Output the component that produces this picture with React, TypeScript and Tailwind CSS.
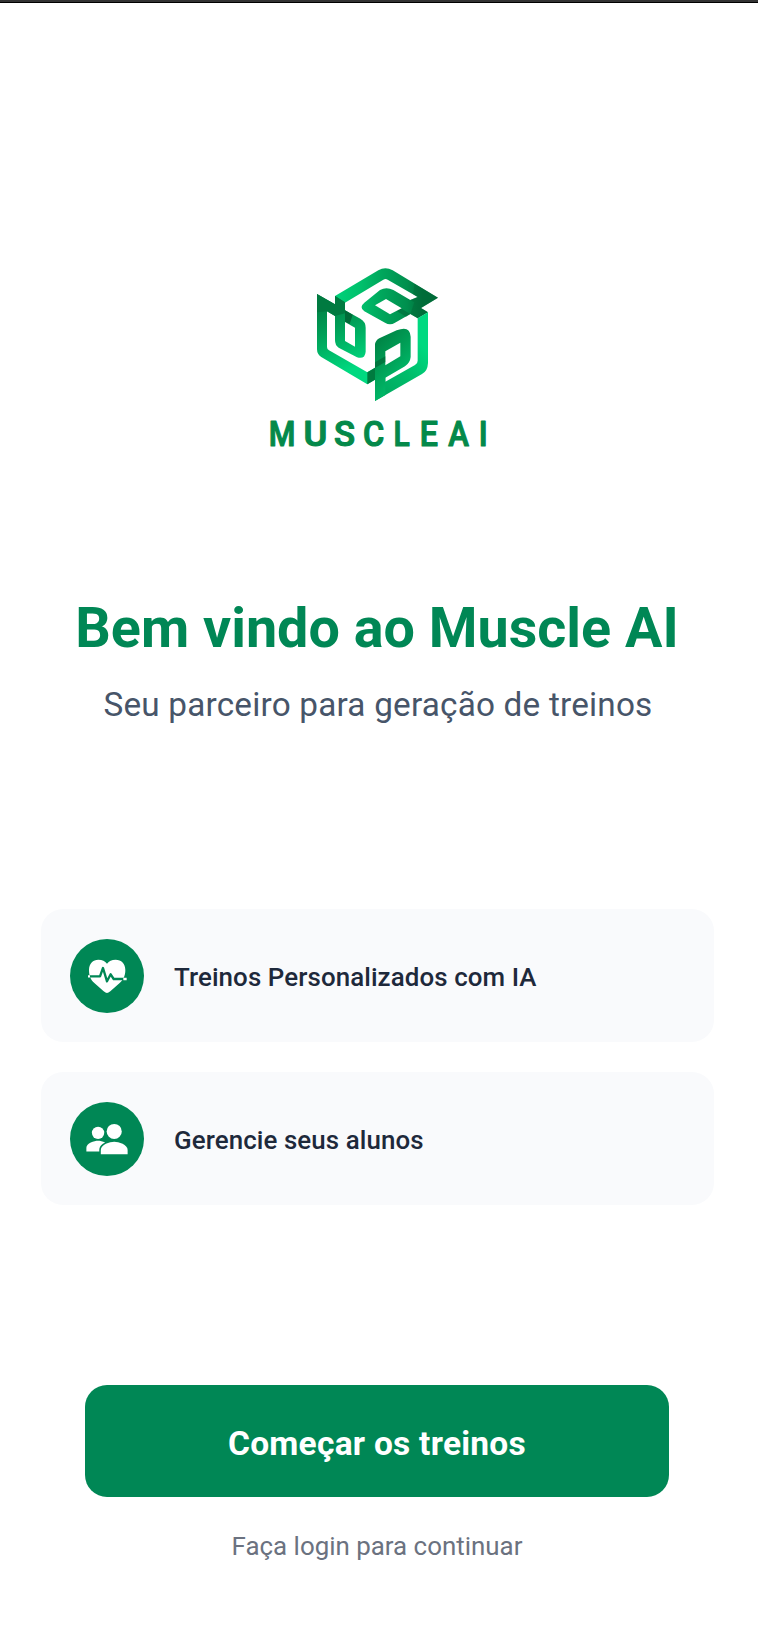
import { IoPeopleSharp } from "react-icons/io5";
import type { ReactNode } from "react";

const wordmark = [
  { char: "M", x: 35, stretch: 0.87 },
  { char: "U", x: 139.5, stretch: 1.04 },
  { char: "S", x: 231, stretch: 0.99 },
  { char: "C", x: 318, stretch: 0.93 },
  { char: "L", x: 409.5, stretch: 0.86 },
  { char: "E", x: 488.5, stretch: 0.92 },
  { char: "A", x: 573.5, stretch: 0.89 },
  { char: "I", x: 665.5, stretch: 0.9 },
];

function Logo() {
  return (
    <svg className="mt-[255px] h-[205px] w-[240px]" viewBox="0 0 720 615" role="img" aria-label="MuscleAI">
      <defs>
        <linearGradient id="top" x1="0" y1="0" x2="1" y2="0">
          <stop offset="0" stopColor="#00d27a" />
          <stop offset=".25" stopColor="#00c06c" />
          <stop offset=".45" stopColor="#00a75c" />
          <stop offset=".7" stopColor="#008f4e" />
          <stop offset=".85" stopColor="#006f3b" />
          <stop offset="1" stopColor="#006b38" />
        </linearGradient>
        <linearGradient id="left" gradientUnits="userSpaceOnUse" x1="60" y1="130" x2="160" y2="370">
          <stop offset="0" stopColor="#007a40" />
          <stop offset=".4" stopColor="#00a058" />
          <stop offset=".65" stopColor="#00bd6b" />
          <stop offset=".9" stopColor="#00d980" />
        </linearGradient>
        <linearGradient id="right" gradientUnits="userSpaceOnUse" x1="384" y1="290" x2="240" y2="420">
          <stop offset="0" stopColor="#00d980" />
          <stop offset=".45" stopColor="#00bd6b" />
          <stop offset="1" stopColor="#00a85f" />
        </linearGradient>
        <linearGradient id="loop" gradientUnits="userSpaceOnUse" x1="235" y1="260" x2="320" y2="340">
          <stop offset="0" stopColor="#008747" />
          <stop offset=".5" stopColor="#009d55" />
          <stop offset="1" stopColor="#00b566" />
        </linearGradient>
      </defs>
      <g transform="translate(129 0)">
        <path fill="url(#top)" d="M105 123 L235 46 Q256 34 278 46 L414 128 L363 159 L384 172 L353 190 L331 177 L285 203 Q270 212 255 203 L193 169 Q176 157 193 143 L240 105 Q259 94 280 105 L331 135 L353 126 L263 74 Q257 70 250 74 L135 143 L135 159 L105 140Z" />
        <path fill="#006b38" fillOpacity=".6" d="M290 152 L331 177 L318 185 L280 162Z" />
        <path fill="#006b38" fillOpacity=".55" d="M343 86 L414 128 L363 159 L384 172 L353 190 L331 177 L343 142 L331 135 L353 126 L340 118Z" />
        <path fill="#fff" d="M225 151 L258 132 L305 160 L270 178Z" />
        <path fill="url(#left)" d="M51 117 L105 148 L105 123 L135 142 L135 166 L181 191 Q197 200 197 218 L197 290 Q195 314 171 307 L116 278 Q105 271 105 255 L105 183 L81 169 L81 276 Q81 283 87 286 L202 352 L225 338 L225 374 L202 388 L65 307 Q51 298 51 283Z" />
        <path fill="#007a40" d="M51 117 L105 148 L105 123 L135 142 L135 175 L105 183 L81 169 L51 172Z" />
        <path fill="#006b38" d="M135 166 L158 179 L149 207 L135 201Z" />
        <path fill="#fff" d="M135 201 L165 218 L165 275 L135 258Z" />
        <path fill="url(#right)" d="M353 190 L384 172 L384 324 Q383 348 366 357 L225 438 L225 380 L256 362 L256 380 L345 330 Q353 326 353 317Z" />
        <path fill="#007a3f" d="M202 352 L225 338 L225 374 L202 388Z" />
        <path fill="url(#loop)" fillRule="evenodd" d="M225 267 Q227 256 238 250 L290 226 Q330 210 332 245 L332 306 Q330 324 315 334 L256 368 L256 420 L225 438Z M256 289 L301 263 L301 304 L256 331Z" />
        <path fill="#006b38" fillOpacity=".75" d="M225 322 L256 304 L256 321 L225 339Z" />
      </g>
      <g fontFamily="Roboto, sans-serif" fontSize="105" fontWeight="500" fill="#04894a" stroke="#04894a" strokeWidth="3.5" strokeLinejoin="round">
        {wordmark.map(({ char, x, stretch }) => (
          <text key={char} transform={`translate(${x} 573) scale(${stretch} 1)`}>{char}</text>
        ))}
      </g>
    </svg>
  );
}

function HeartPulse() {
  return (
    <svg className="h-11 w-11" viewBox="0 0 132 132" fill="none">
      <path fill="#fff" d="M66 117 Q62 117 56 112 L28 87 C17 77 12 66 12 48 C12 29 24 17 40 17 C52 17 60 21 66 29 C72 21 80 17 92 17 C109 17 121 29 121 48 C121 66 115 77 104 87 L76 112 Q70 117 66 117Z" />
      <path d="M12 67 H45 L54 42 L66 82 L77 61 L86 75 H122" stroke="#008755" strokeWidth="7" strokeLinejoin="round" />
      <path d="M9 67 H15 M115 75 H125" stroke="#fff" strokeWidth="7" />
    </svg>
  );
}

function Feature({ icon, children }: { icon: ReactNode; children: ReactNode }) {
  return (
    <div className="flex h-[133px] items-center gap-[30px] rounded-[22px] bg-[#f9fafc] pl-[29.5px]">
      <div className="flex h-[74px] w-[74px] shrink-0 items-center justify-center rounded-full bg-[#008755] text-white">{icon}</div>
      <p className="pt-[3px] text-[25.9px] leading-[37px] font-medium tracking-[0.09px] text-[#1e293b]">{children}</p>
    </div>
  );
}

export default function App() {
  return (
    <main className="h-[1650px] w-[758px] overflow-hidden bg-white font-['Roboto',sans-serif]">
      <div className="h-[3px] border-b border-black bg-[#333]" />
      <div className="-mt-[3px] flex w-[754px] flex-col items-center">
        <Logo />
        <h1 className="mt-[135px] text-[55.7px] leading-[67px] font-bold whitespace-nowrap text-[#008755]">Bem vindo ao Muscle AI</h1>
        <p className="mt-[20px] pl-[2px] text-[33.3px] leading-[46px] tracking-[0.2px] whitespace-nowrap text-[#475569]">Seu parceiro para geração de treinos</p>
        <section className="mt-[181px] flex w-[673px] flex-col gap-[30px]">
          <Feature icon={<HeartPulse />}>Treinos Personalizados com IA</Feature>
          <Feature icon={<IoPeopleSharp className="h-11 w-11" />}>Gerencie seus alunos</Feature>
        </section>
        <button className="mt-[180px] h-[112px] w-[584px] rounded-[22px] bg-[#008755] pt-[6px] text-[33.5px] font-bold tracking-[0.25px] text-white">Começar os treinos</button>
        <p className="mt-[31px] text-[25.9px] leading-[37px] text-[#6b7280]">Faça login para continuar</p>
      </div>
    </main>
  );
}
